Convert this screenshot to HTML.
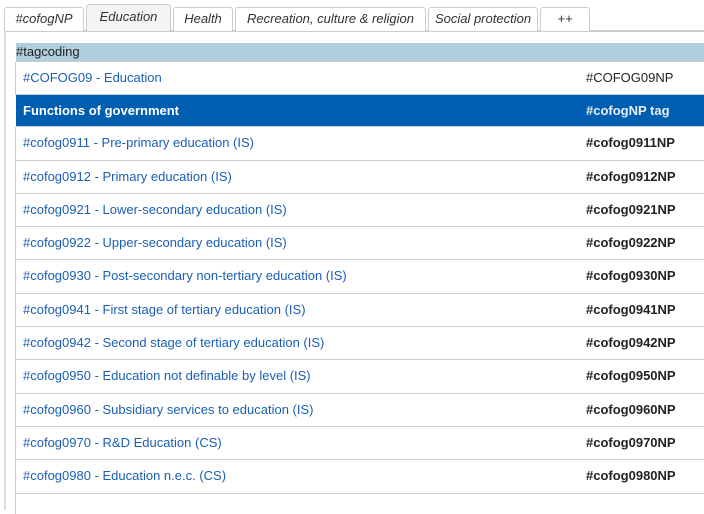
<!DOCTYPE html>
<html><head><meta charset="utf-8"><style>
*{margin:0;padding:0;box-sizing:border-box}
body{width:704px;height:502px;overflow:hidden;background:#fff;font-family:"Liberation Sans",Arial,sans-serif;position:relative}
.tab{position:absolute;top:7px;height:24px;border:1px solid #ccc;border-bottom:none;border-radius:3px 3px 0 0;font-style:italic;font-size:13px;color:#333;text-align:center;line-height:22px;background:#fff}
.tab.act{top:4px;height:27px;background:#f4f4f4;line-height:24px}
.frame{position:absolute;left:4px;top:30px;right:-5px;height:480px;border-left:2px solid #ddd;border-top:2px solid #ccc}
.tag{position:absolute;left:16px;top:43px;width:700px;height:19px;background:#afcfdf;font-size:13px;color:#222;line-height:18px;border-bottom:1px solid #ccc}
.row{position:absolute;left:15px;width:700px;border-left:1px solid #ccc;border-bottom:1px solid #ccc;font-size:13px;color:#1a5fb4}
.row span{position:absolute;left:7px;top:8px}
.row b{position:absolute;left:570px;top:8px;color:#222}
.hd{background:#005eb0;color:#fff;font-weight:bold;border-left:none;left:16px}
.hd b{color:#e8eef6}
</style></head><body>
<div class="frame"></div>
<div class="tab" style="left:4px;width:80px">#cofogNP</div>
<div class="tab act" style="left:86px;width:85px">Education</div>
<div class="tab" style="left:173px;width:60px">Health</div>
<div class="tab" style="left:235px;width:191px">Recreation, culture &amp; religion</div>
<div class="tab" style="left:428px;width:110px">Social protection</div>
<div class="tab" style="left:540px;width:50px">++</div>
<div class="tag">#tagcoding</div>
<div class="row" style="top:62px;height:33px"><span>#COFOG09 - Education</span><b style="font-weight:normal">#COFOG09NP</b></div>
<div class="row hd" style="top:95px;height:32px"><span>Functions of government</span><b>#cofogNP tag</b></div>
<div class="row" style="top:127px;height:34px"><span>#cofog0911 - Pre-primary education (IS)</span><b>#cofog0911NP</b></div>
<div class="row" style="top:161px;height:33px"><span>#cofog0912 - Primary education (IS)</span><b>#cofog0912NP</b></div>
<div class="row" style="top:194px;height:33px"><span>#cofog0921 - Lower-secondary education (IS)</span><b>#cofog0921NP</b></div>
<div class="row" style="top:227px;height:33px"><span>#cofog0922 - Upper-secondary education (IS)</span><b>#cofog0922NP</b></div>
<div class="row" style="top:260px;height:34px"><span>#cofog0930 - Post-secondary non-tertiary education (IS)</span><b>#cofog0930NP</b></div>
<div class="row" style="top:294px;height:33px"><span>#cofog0941 - First stage of tertiary education (IS)</span><b>#cofog0941NP</b></div>
<div class="row" style="top:327px;height:33px"><span>#cofog0942 - Second stage of tertiary education (IS)</span><b>#cofog0942NP</b></div>
<div class="row" style="top:360px;height:34px"><span>#cofog0950 - Education not definable by level (IS)</span><b>#cofog0950NP</b></div>
<div class="row" style="top:394px;height:33px"><span>#cofog0960 - Subsidiary services to education (IS)</span><b>#cofog0960NP</b></div>
<div class="row" style="top:427px;height:33px"><span>#cofog0970 - R&amp;D Education (CS)</span><b>#cofog0970NP</b></div>
<div class="row" style="top:460px;height:34px"><span>#cofog0980 - Education n.e.c. (CS)</span><b>#cofog0980NP</b></div>
<div class="row" style="top:494px;height:20px;border-bottom:none"></div>
</body></html>
